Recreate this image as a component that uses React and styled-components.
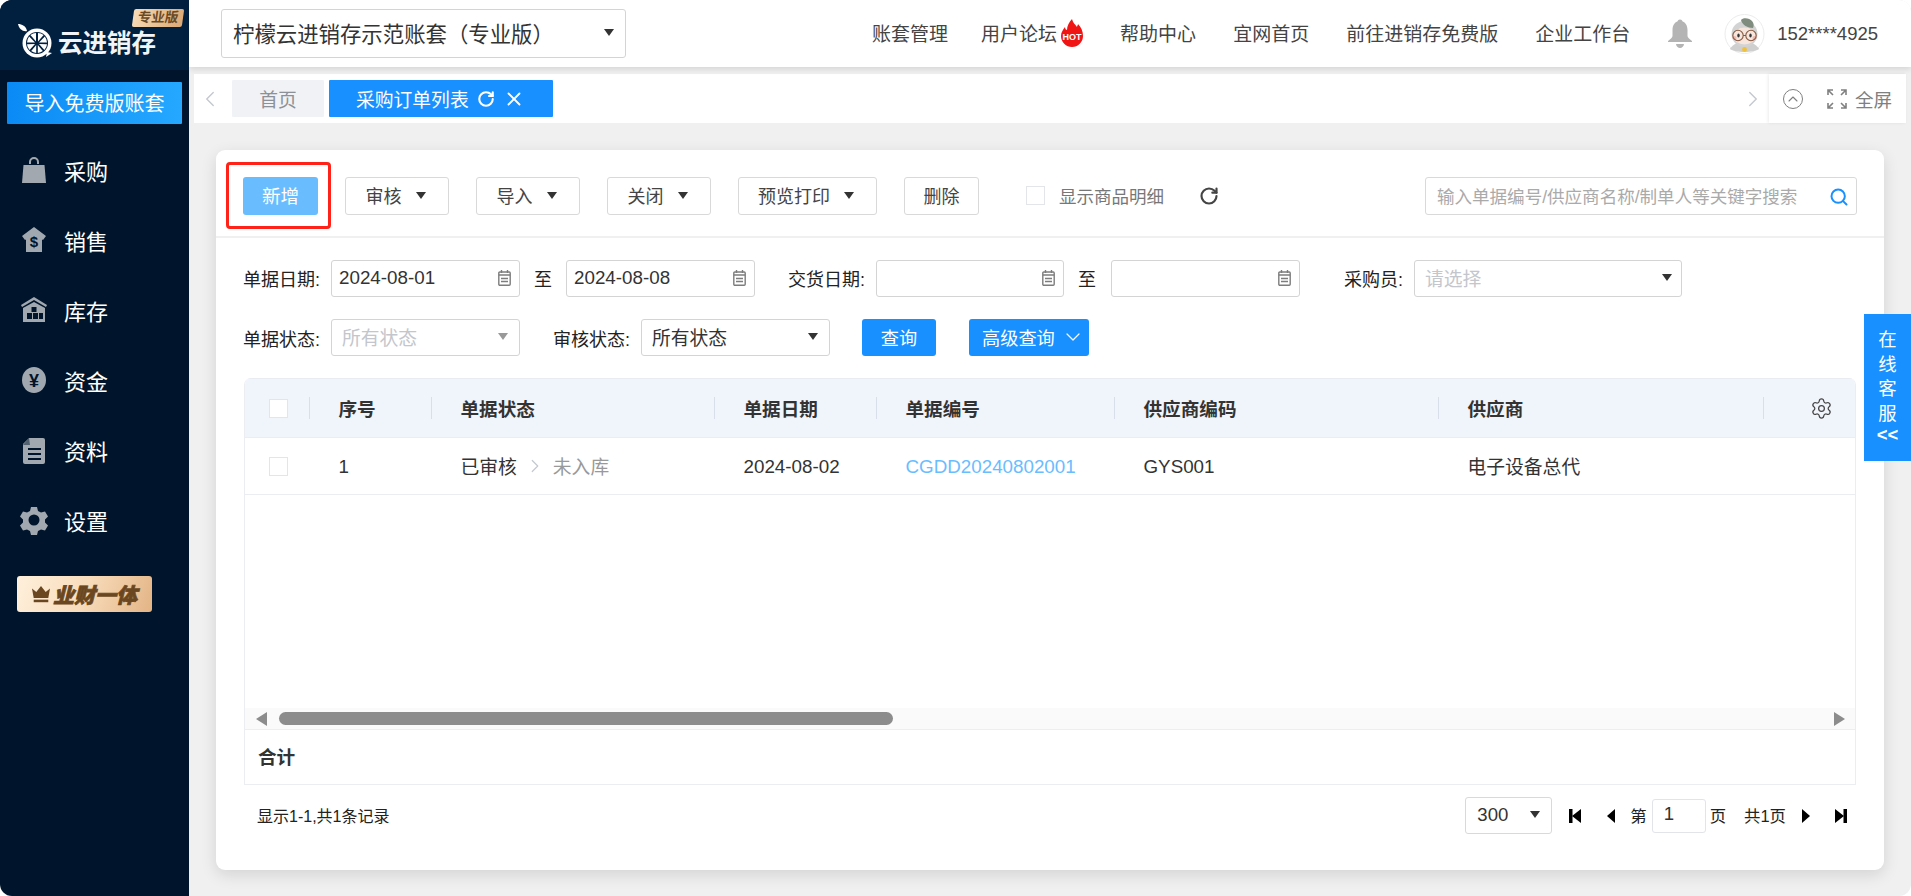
import React from 'react';
import styled, { createGlobalStyle } from 'styled-components';
import { ChevronLeft, ChevronRight, ChevronDown, RotateCw, X, Search, Settings, ChevronUp } from 'lucide-react';

const Global = createGlobalStyle`
  html, body { margin: 0; padding: 0; background: #fff; overflow: hidden; }
  * { box-sizing: border-box; }
  body { font-family: "Liberation Sans", "Noto Sans CJK SC", sans-serif; font-size: 18.6px; color: #333; }
`;

const Shell = styled.div`
  width: 1911px; height: 896px; display: grid; grid-template-columns: 189px 1fr;
  background: #f0f0f0; border-radius: 12px; overflow: hidden; position: relative;
`;

/* ---------- sidebar ---------- */
const Sidebar = styled.aside`background: #00152b; display: flex; flex-direction: column; align-items: stretch;`;
const LogoBar = styled.div`
  height: 70px; background: #012040; position: relative; display: flex; align-items: flex-end;
  padding: 0 0 11px 17px; gap: 1px; color: #fff;
`;
const LogoText = styled.span`font-size: 24.5px; font-weight: 700; line-height: 30px; letter-spacing: 0; color: #f2f5f8;`;
const EditionBadge = styled.span`
  position: absolute; left: 133px; top: 9px; width: 50px; height: 18px; border-radius: 2px;
  background: linear-gradient(100deg, #f8dcb8, #dba873); color: #6a4a26; font-size: 13.5px; font-weight: 700;
  display: flex; align-items: center; justify-content: center; transform: skewX(-8deg); line-height: 1;
`;
const ImportBtn = styled.div`
  margin: 12px 7px 0; height: 42px; background: linear-gradient(90deg, #0a8af5, #25a8ff); padding-bottom: 2px;
  color: #fff; font-size: 20px; display: flex; align-items: center; justify-content: center; border-radius: 1px;
`;
const Menu = styled.nav`margin-top: 11px; display: flex; flex-direction: column;`;
const MenuItem = styled.div`
  height: 70px; display: flex; align-items: center; padding-left: 20px; gap: 16px;
  color: #fff; font-size: 22px;
`;
const MenuIcon = styled.svg`width: 28px; height: 30px; fill: #a2a8b0; flex: none;`;
const GoldBtn = styled.div`
  margin: 21px 0 0 17px; width: 135px; height: 36px; border-radius: 3px; padding-left: 15px;
  background: linear-gradient(110deg, #fff0dc 0%, #f8dcbb 50%, #e3b485 100%);
  display: flex; align-items: center; gap: 3px;
  color: #6a4720; font-size: 21px; font-weight: 900; font-style: italic; -webkit-text-stroke: .7px #6a4720; white-space: nowrap;
`;

/* ---------- header ---------- */
const Main = styled.main`display: flex; flex-direction: column; min-width: 0;`;
const Header = styled.header`
  height: 67px; flex: none; background: #fff; box-shadow: 0 2px 6px rgba(0,0,0,.12);
  display: flex; align-items: center; padding: 0 33px 0 32px; position: relative;
`;
const AccountSelect = styled.div`
  width: 405px; height: 49px; border: 1px solid #d4d4d4; border-radius: 3px; display: flex; align-items: center;
  justify-content: space-between; padding: 0 11px 2px 11px; font-size: 21.4px; color: #333;
`;
const HeaderNav = styled.div`margin-left: auto; display: flex; align-items: center; gap: 37px; height: 100%;`;
const NavLink = styled.span`
  font-size: 19px; color: #444; display: inline-flex; align-items: center; gap: 4px; white-space: nowrap;
  margin-right: ${p => p.$pull || 0}px; position: relative; top: -1px;
`;
const BellSlot = styled.span`display: flex; margin: 0 -5px 0 1px;`;
const UserBox = styled.div`display: flex; align-items: center; gap: 12px;`;
const Phone = styled.span`font-size: 18.5px; color: #444;`;

/* ---------- tabs ---------- */
const TabBar = styled.div`
  margin: 7px 5px 0; height: 49px; flex: none; background: #fff; display: flex; align-items: flex-start; padding-left: 3px;
`;
const TabArrow = styled.div`
  height: 37px; margin-top: 6px; width: 26px; display: flex; align-items: center; justify-content: center; color: #c4c8cf;
  margin-right: ${p => p.$mr || 0}px;
`;
const Tab = styled.div`
  height: 37px; margin-top: 6px; margin-left: ${p => p.$ml}px; width: ${p => p.$w}px; display: flex; align-items: center;
  justify-content: ${p => p.$active ? 'flex-start' : 'center'}; padding-left: ${p => p.$active ? 27 : 0}px;
  background: ${p => p.$active ? '#1890ff' : '#f0f2f5'}; color: ${p => p.$active ? '#fff' : '#8c9098'}; font-size: 18.8px; border-radius: 1px;
`;
const TabSpacer = styled.div`flex: 1;`;
const TabTools = styled.div`
  width: 137px; height: 49px; box-shadow: -1px 0 3px rgba(0,0,0,.08); display: flex; align-items: center;
  padding-left: 14px; color: #808080; font-size: 18.6px;
`;
const CircleUp = styled.span`
  width: 20px; height: 20px; border: 1.5px solid #808080; border-radius: 50%; display: flex; align-items: center; justify-content: center; margin-right: 24px;
`;
const ToolLabel = styled.span`margin-left: 8px;`;
const TabRefresh = styled(RotateCw)`margin-left: 8px;`;
const TabClose = styled(X)`margin-left: 8px;`;

/* ---------- card ---------- */
const Card = styled.section`
  margin: 27px 27px 0; height: 720px; flex: none; background: #fff; border-radius: 9px;
  box-shadow: 0 5px 16px rgba(0,0,0,.12); display: flex; flex-direction: column;
`;
const Toolbar = styled.div`
  height: 88px; flex: none; padding: 27px 27px 0; border-bottom: 2px solid #f0f0f0; display: flex; align-items: flex-start; gap: 27px;
`;
const AddWrap = styled.div`
  position: relative; height: 38px;
  &::after { content: ""; position: absolute; left: -17px; right: -13px; top: -15px; bottom: -14px; border: 3px solid #ff2218; border-radius: 4px; }
`;
const AddBtn = styled.div`
  width: 75px; height: 38px; background: #69bdff; color: #fff; border-radius: 3px; display: flex; align-items: center; justify-content: center; padding-bottom: 4px;
`;
const ToolBtn = styled.div`
  width: ${p => p.$w}px; height: 38px; border: 1px solid #d9d9d9; border-radius: 3px; display: flex; align-items: center; justify-content: center; gap: 14px; color: #444; font-size: 18px;
  padding: 0 ${p => p.$plain ? 0 : 3}px 2px 0;
`;
const Caret = styled.i`
  display: inline-block; flex: none; width: 0; height: 0; border-left: 5.5px solid transparent; border-right: 5.5px solid transparent;
  border-top: 7px solid ${p => p.$c || '#333'};
`;
const CheckWrap = styled.label`display: flex; align-items: center; gap: 14px; color: #777; height: 38px; margin-left: 20px; font-size: 17.5px; padding-bottom: 1px;`;
const Check = styled.i`
  display: block; width: 19px; height: 19px; border: 1px solid #e3e5ea; background: #fff; flex: none;
`;
const RefreshBtn = styled.span`display: flex; align-items: center; height: 38px; margin-left: 8px; color: #444; padding-bottom: 1px;`;
const SearchBox = styled.div`
  margin-left: auto; width: 432px; height: 38px; border: 1px solid #d9d9d9; border-radius: 3px; display: flex; align-items: center;
  justify-content: space-between; padding: 0 7px 2px 11px; color: #aaa; font-size: 17.55px;
`;
const Glass = styled(Search)`margin-top: 3px;`;

const Filters = styled.div`padding: 21px 28px 0 27px; display: flex; flex-direction: column; gap: 22px;`;
const FilterRow = styled.div`display: flex; align-items: center; height: ${p => p.$h}px;`;
const Field = styled.div`display: flex; align-items: center; gap: 11px; margin-left: ${p => p.$ml || 0}px;`;
const Label = styled.span`color: #222; white-space: nowrap; font-size: 18px;`;
const Box = styled.div`
  width: ${p => p.$w}px; height: 37px; border: 1px solid #d4d4d4; border-radius: 3px; display: flex; align-items: center;
  justify-content: space-between; padding: 0 8px 0 7px; color: ${p => p.$muted ? '#c3c6cc' : '#333'}; font-size: 18.8px; background: #fff;
`;
const SelectBox = styled(Box)`padding: 0 ${p => p.$pr ?? 11}px 2px 10px;`;
const To = styled.span`margin: 0 ${p => p.$r ?? 14}px 0 14px; color: #222; font-size: 18px;`;
const PrimaryBtn = styled.div`
  width: ${p => p.$w}px; margin-left: ${p => p.$ml}px; height: 37px; background: #1890ff; color: #fff; border-radius: 3px;
  display: flex; align-items: center; justify-content: ${p => p.$start ? 'flex-start' : 'center'}; gap: 6px; font-size: 18.2px; flex: none; padding: 0 0 2px ${p => p.$start ? 13 : 0}px;
`;

const Table = styled.div`
  margin: 22px 28px 0; height: 407px; flex: none; display: flex; flex-direction: column;
  border: solid #ebedf3; border-width: 0 1px 1px 1px; border-radius: 7px 7px 0 0; overflow: hidden;
`;
const cols = '65px 122px 283px 162px 238px 324px 325px 1fr';
const HeadRow = styled.div`
  height: 60px; flex: none; display: grid; grid-template-columns: ${cols}; align-items: center; background: #f0f4fb; border-top: 1px solid #e8ebf1;
  border-bottom: 1px solid #e9edf4; font-weight: 700; color: #333;
`;
const HeadCell = styled.div`
  height: 22px; display: flex; align-items: center; padding-left: ${p => p.$pl ?? 28.5}px; padding-bottom: ${p => p.$last ? 0 : 1}px;
  border-right: ${p => p.$last ? 0 : '1px solid #d9dfe9'}; justify-content: ${p => p.$last ? 'flex-end' : 'flex-start'};
  padding-right: ${p => p.$last ? 22 : 0}px;
`;
const CheckCell = styled(HeadCell)`padding-bottom: 0;`;
const BodyRow = styled.div`
  height: 57px; flex: none; display: grid; grid-template-columns: ${cols}; align-items: center; border-bottom: 1px solid #ebedf3; color: #333; font-size: 18.8px;
`;
const BodyCell = styled.div`
  display: flex; align-items: center; padding-left: ${p => p.$pl ?? 28.5}px;
  padding-top: ${p => p.$latin ? 1 : 0}px; padding-bottom: ${p => p.$cjk ? 1 : 0}px;
`;
const Muted = styled.span`color: #999;`;
const Sep = styled.span`display: flex; margin: 0 7px; color: #c4c8cf;`;
const Link = styled.a`color: #69bdff; text-decoration: none;`;
const Empty = styled.div`flex: 1;`;
const ScrollBar = styled.div`
  height: 22px; flex: none; background: #fafafa; display: flex; align-items: center; padding: 0 10px 0 11px; border-bottom: 1px solid #eceef4;
`;
const Thumb = styled.div`width: 614px; height: 13px; background: #8c8c8c; border-radius: 7px; margin-left: 12px;`;
const ArrowL = styled.i`width: 0; height: 0; border-top: 7px solid transparent; border-bottom: 7px solid transparent; border-right: 11px solid #8c8c8c;`;
const ArrowR = styled.i`width: 0; height: 0; border-top: 7px solid transparent; border-bottom: 7px solid transparent; border-left: 11px solid #8c8c8c; margin-left: auto;`;
const TotalRow = styled.div`height: 54px; flex: none; display: flex; align-items: center; padding: 0 0 3px 13px; font-weight: 700; color: #333;`;

const Footer = styled.div`
  margin: 12px 37px 0 41px; height: 37px; display: flex; align-items: center; justify-content: space-between;
`;
const Summary = styled.span`font-size: 16px; color: #222; padding-bottom: 2px;`;
const Pager = styled.div`display: flex; align-items: center; font-size: 16.4px; color: #222;`;
const PageSize = styled.div`
  width: 87px; height: 37px; border: 1px solid #d9d9d9; border-radius: 3px; display: flex; align-items: center; justify-content: space-between;
  padding: 0 11px 2px 11px; font-size: 18.6px; color: #333; margin-right: 17px;
`;
const PageIcon = styled.svg`width: ${p => p.$w}px; height: 14px; margin-left: ${p => p.$ml}px; fill: #000; flex: none;`;
const PageText = styled.span`margin-left: ${p => p.$ml}px; padding-bottom: 2px;`;
const PageInput = styled.div`
  width: 54px; height: 34px; margin-left: 5px; border: 1px solid #e3e3ea; border-radius: 3px; display: flex; align-items: center; padding: 0 0 3px 11px; font-size: 18.6px; color: #333;
`;

const ServiceFloat = styled.div`
  position: absolute; right: 0; top: 314px; width: 47px; height: 147px; background: #1890ff; color: #fff;
  display: flex; flex-direction: column; align-items: center; padding-top: 14px; font-size: 18.4px; line-height: 24.5px;
`;
const Collapse = styled.span`margin-top: -3px; font-weight: 700;`;

/* ---------- icons ---------- */
const Lemon = () => (
  <svg width="40" height="36" viewBox="0 0 40 36">
    <path d="M1 1c4 0 8 2 9 7-4 1-8-2-9-7z" fill="#fff" />
    <circle cx="20" cy="20" r="14.5" fill="#fff" />
    <path d="M30 29l5 1-6 4z" fill="#fff" />
    <circle cx="20" cy="20" r="11" fill="#012040" />
    <g fill="#fff">
      <path d="M19 18.5V10a10 10 0 0 0-5.6 2z" />
      <path d="M21 18.5V10a10 10 0 0 1 5.6 2z" />
      <path d="M22 19.5l5.8-6a10 10 0 0 1 2.2 6z" />
      <path d="M22 21l8 .2a10 10 0 0 1-2.6 5.8z" />
      <path d="M20.8 22l5 6a10 10 0 0 1-5 2z" />
      <path d="M19.2 22l-5 6a10 10 0 0 0 5 2z" />
      <path d="M18 21l-8 .2a10 10 0 0 0 2.6 5.8z" />
      <path d="M18 19.5l-5.8-6a10 10 0 0 0-2.2 6z" />
    </g>
  </svg>
);
const IconBag = () => (
  <MenuIcon viewBox="0 0 28 30"><path d="M9 9V7a5 5 0 0 1 10 0v2h-2V7a3 3 0 0 0-6 0v2z" /><path d="M3.500 10h21L26 28H2z" /></MenuIcon>
);
const IconSale = () => (
  <MenuIcon viewBox="0 0 28 30">
    <path d="M14 2l12 9-3 4-1-.5V27H6V14.500L5 15l-3-4z" />
    <text x="14" y="22" textAnchor="middle" fontSize="15" fontWeight="700" fill="#00152b" fontFamily="Liberation Sans">$</text>
  </MenuIcon>
);
const IconStore = () => (
  <MenuIcon viewBox="0 0 28 30">
    <path d="M14 2L1 10l1 2 12-7 12 7 1-2z" />
    <path d="M3 13l11-6 11 6v14H3z" />
    <g fill="#00152b"><rect x="11.500" y="12" width="5" height="5" /><rect x="7" y="18" width="5" height="6" /><rect x="13" y="18" width="5" height="6" /><rect x="19" y="18" width="4" height="6" /></g>
  </MenuIcon>
);
const IconCoin = () => (
  <MenuIcon viewBox="0 0 28 30">
    <ellipse cx="14" cy="15" rx="12" ry="13" />
    <text x="14" y="22" textAnchor="middle" fontSize="18" fontWeight="700" fill="#00152b" fontFamily="Liberation Sans">¥</text>
  </MenuIcon>
);
const IconDoc = () => (
  <MenuIcon viewBox="0 0 28 30">
    <path d="M9 3h14a2 2 0 0 1 2 2v22a2 2 0 0 1-2 2H5a2 2 0 0 1-2-2V9z" />
    <g fill="#00152b"><rect x="8" y="13" width="13" height="2" /><rect x="8" y="18" width="13" height="2" /><rect x="8" y="23" width="13" height="2" /><path d="M9 3l1 7H3.500l-1 .5z" opacity=".5" /></g>
  </MenuIcon>
);
const IconGear = () => (
  <MenuIcon viewBox="0 0 28 30">
    <path fillRule="evenodd" d="M11 2h6l1 4 3 1.500 4-1 3 5-3 3v3l3 3-3 5-4-1-3 1.500-1 4h-6l-1-4-3-1.500-4 1-3-5 3-3v-3L0 11.500l3-5 4 1L10 6zM14 9.500a5.500 5.500 0 1 0 0 11 5.500 5.500 0 0 0 0-11z" />
  </MenuIcon>
);
const Crown = () => (
  <svg width="18" height="19" viewBox="0 0 21 22" fill="#6a4720">
    <path d="M0 4l5 4 5.500-7L16 8l5-4-2 11H2z" /><rect x="2" y="17" width="17" height="3" />
  </svg>
);
const HotFlame = () => (
  <svg width="22" height="28" viewBox="0 0 22 28">
    <path d="M11 0c1 4 3 5 5 8 0-1 1-2 1-3 3 3 5 7 5 12a11 11 0 0 1-22 0c0-4 2-6 4-9 0 2 1 3 2 3 0-4 2-8 5-11z" fill="#f01414" />
    <text x="11" y="21" textAnchor="middle" fontSize="9" fontWeight="700" fill="#fff" fontFamily="Liberation Sans">HOT</text>
  </svg>
);
const Bell = () => (
  <svg width="24" height="29" viewBox="0 0 24 29" fill="#b4b4b4">
    <circle cx="12" cy="3" r="2.500" />
    <path d="M12 2c5 0 7.500 4 7.500 9v6c0 2 2.500 3 4.500 5v1H0v-1c2-2 4.500-3 4.500-5v-6C4.500 6 7 2 12 2z" />
    <path d="M8 25h8c0 2-2 4-4 4s-4-2-4-4z" />
  </svg>
);
const Avatar = () => (
  <svg width="41" height="40" viewBox="0 0 41 40">
    <circle cx="20.500" cy="20" r="19.500" fill="#fff" stroke="#ececec" />
    <path d="M11 30c-3 2-5 4-5 5 5 4 24 4 29 0 0-1-2-3-5-5z" fill="#cfcfcf" />
    <circle cx="20.500" cy="20" r="13" fill="#d3d3d3" />
    <path d="M17 6c2-3 9-2 11 1 2 2 2 5 1 7-5 0-11-3-12-8z" fill="#7f8c7e" />
    <ellipse cx="20.500" cy="22" rx="11" ry="8.500" fill="#f6e6de" />
    <circle cx="10.500" cy="24" r="2" fill="#f4b8b0" />
    <circle cx="30.500" cy="24" r="2" fill="#f4b8b0" />
    <circle cx="14" cy="21.500" r="5.200" fill="none" stroke="#8a5a40" strokeWidth="1.100" />
    <circle cx="27" cy="21.500" r="5.200" fill="none" stroke="#8a5a40" strokeWidth="1.100" />
    <path d="M19 21.500h3" stroke="#8a5a40" strokeWidth="1" />
    <ellipse cx="14.500" cy="21.500" rx="1.200" ry="2" fill="#333" />
    <ellipse cx="26.500" cy="21.500" rx="1.200" ry="2" fill="#333" />
    <circle cx="20.500" cy="35.500" r="2.400" fill="#f2c230" />
  </svg>
);
const Expand = () => (
  <svg width="20" height="20" viewBox="0 0 20 20" fill="none" stroke="#808080" strokeWidth="1.600">
    <path d="M1 6V1h5M1 1l5 5M19 6V1h-5M19 1l-5 5M1 14v5h5M1 19l5-5M19 14v5h-5M19 19l-5-5" />
  </svg>
);
const Calendar = () => (
  <svg width="13" height="16" viewBox="0 0 13 16" fill="none" stroke="#7d7d7d" strokeWidth="1.400">
    <rect x="0.800" y="2" width="11.400" height="13.200" rx="1" />
    <path d="M0.800 5h11.400M3.500 0v3M9.500 0v3M3 8.500h7M3 11.500h7" />
  </svg>
);

const menu = [['采购', IconBag], ['销售', IconSale], ['库存', IconStore], ['资金', IconCoin], ['资料', IconDoc], ['设置', IconGear]];
const tools = [['审核', 104], ['导入', 104], ['关闭', 104], ['预览打印', 139]];

const DateBox = ({ w = 189, value }) => <Box $w={w}><span>{value}</span><Calendar /></Box>;

export default function App() {
  return (
    <Shell>
      <Global />
      <Sidebar>
        <LogoBar>
          <Lemon /><LogoText>云进销存</LogoText>
          <EditionBadge>专业版</EditionBadge>
        </LogoBar>
        <ImportBtn>导入免费版账套</ImportBtn>
        <Menu>
          {menu.map(([t, I]) => <MenuItem key={t}><I /><span>{t}</span></MenuItem>)}
        </Menu>
        <GoldBtn><Crown /><span>业财一体</span></GoldBtn>
      </Sidebar>
      <Main>
        <Header>
          <AccountSelect><span>柠檬云进销存示范账套（专业版）</span><Caret /></AccountSelect>
          <HeaderNav>
            <NavLink $pull={-4}>账套管理</NavLink>
            <NavLink>用户论坛<HotFlame /></NavLink>
            <NavLink>帮助中心</NavLink>
            <NavLink>宜网首页</NavLink>
            <NavLink>前往进销存免费版</NavLink>
            <NavLink>企业工作台</NavLink>
            <BellSlot><Bell /></BellSlot>
            <UserBox><Avatar /><Phone>152****4925</Phone></UserBox>
          </HeaderNav>
        </Header>
        <TabBar>
          <TabArrow><ChevronLeft size={26} strokeWidth={1.3} /></TabArrow>
          <Tab $ml={9} $w={92}>首页</Tab>
          <Tab $ml={5} $w={224} $active>
            采购订单列表
            <TabRefresh size={18} strokeWidth={2.8} />
            <TabClose size={22} strokeWidth={2} />
          </Tab>
          <TabSpacer />
          <TabArrow $mr={3}><ChevronRight size={26} strokeWidth={1.3} /></TabArrow>
          <TabTools>
            <CircleUp><ChevronUp size={16} strokeWidth={1.6} /></CircleUp>
            <Expand /><ToolLabel>全屏</ToolLabel>
          </TabTools>
        </TabBar>
        <Card>
          <Toolbar>
            <AddWrap><AddBtn>新增</AddBtn></AddWrap>
            {tools.map(([t, w]) => <ToolBtn key={t} $w={w}>{t}<Caret /></ToolBtn>)}
            <ToolBtn $w={75} $plain>删除</ToolBtn>
            <CheckWrap><Check />显示商品明细</CheckWrap>
            <RefreshBtn><RotateCw size={20} strokeWidth={2.6} /></RefreshBtn>
            <SearchBox><span>输入单据编号/供应商名称/制单人等关键字搜索</span><Glass size={20} color="#1890ff" strokeWidth={2.4} /></SearchBox>
          </Toolbar>
          <Filters>
            <FilterRow $h={38}>
              <Field><Label>单据日期:</Label><DateBox value="2024-08-01" /></Field>
              <To>至</To><DateBox value="2024-08-08" />
              <Field $ml={33}><Label>交货日期:</Label><DateBox w={188} /></Field>
              <To $r={15}>至</To><DateBox />
              <Field $ml={44}><Label>采购员:</Label><SelectBox $w={268} $pr={9} $muted>请选择<Caret /></SelectBox></Field>
            </FilterRow>
            <FilterRow $h={37}>
              <Field><Label>单据状态:</Label><SelectBox $w={189} $muted>所有状态<Caret $c="#999" /></SelectBox></Field>
              <Field $ml={33}><Label>审核状态:</Label><SelectBox $w={189}>所有状态<Caret /></SelectBox></Field>
              <PrimaryBtn $w={74} $ml={32}>查询</PrimaryBtn>
              <PrimaryBtn $w={120} $ml={33} $start>高级查询<ChevronDown size={24} strokeWidth={1.2} /></PrimaryBtn>
            </FilterRow>
          </Filters>
          <Table>
            <HeadRow>
              <CheckCell $pl={24}><Check /></CheckCell>
              <HeadCell>序号</HeadCell>
              <HeadCell>单据状态</HeadCell>
              <HeadCell>单据日期</HeadCell>
              <HeadCell>单据编号</HeadCell>
              <HeadCell>供应商编码</HeadCell>
              <HeadCell>供应商</HeadCell>
              <HeadCell $last $pl={0}><Settings size={23} strokeWidth={1.3} color="#444" /></HeadCell>
            </HeadRow>
            <BodyRow>
              <BodyCell $pl={24}><Check /></BodyCell>
              <BodyCell $latin>1</BodyCell>
              <BodyCell $cjk>已审核<Sep><ChevronRight size={22} strokeWidth={1.3} /></Sep><Muted>未入库</Muted></BodyCell>
              <BodyCell $latin>2024-08-02</BodyCell>
              <BodyCell $latin><Link>CGDD20240802001</Link></BodyCell>
              <BodyCell $latin>GYS001</BodyCell>
              <BodyCell $cjk>电子设备总代</BodyCell>
              <BodyCell />
            </BodyRow>
            <Empty />
            <ScrollBar><ArrowL /><Thumb /><ArrowR /></ScrollBar>
            <TotalRow>合计</TotalRow>
          </Table>
          <Footer>
            <Summary>显示1-1,共1条记录</Summary>
            <Pager>
              <PageSize>300<Caret /></PageSize>
              <PageIcon $w={12} $ml={0} viewBox="0 0 12 14"><rect width="3.500" height="14" /><path d="M12 0v14L3 7z" /></PageIcon>
              <PageIcon $w={8} $ml={26} viewBox="0 0 8 14"><path d="M8 0v14L0 7z" /></PageIcon>
              <PageText $ml={15}>第</PageText>
              <PageInput>1</PageInput>
              <PageText $ml={4}>页</PageText>
              <PageText $ml={18}>共1页</PageText>
              <PageIcon $w={8} $ml={16} viewBox="0 0 8 14"><path d="M0 0v14l8-7z" /></PageIcon>
              <PageIcon $w={12} $ml={25} viewBox="0 0 12 14"><path d="M0 0v14l9-7z" /><rect x="8.500" width="3.500" height="14" /></PageIcon>
            </Pager>
          </Footer>
        </Card>
      </Main>
      <ServiceFloat>
        <span>在</span><span>线</span><span>客</span><span>服</span><Collapse>&lt;&lt;</Collapse>
      </ServiceFloat>
    </Shell>
  );
}
